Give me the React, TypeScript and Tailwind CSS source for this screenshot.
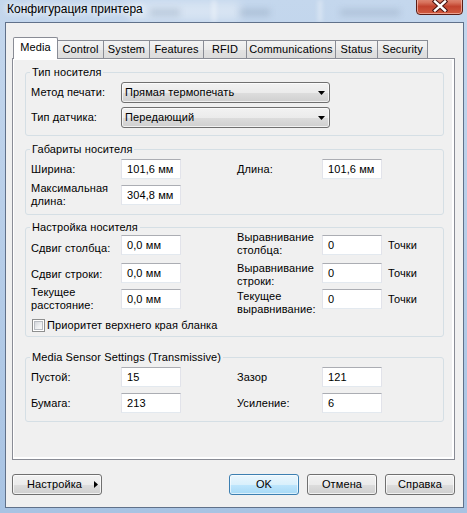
import React from "react";

function TB({ v }: { v: string }) {
  return (
    <div className="w-[60px] h-[20px] shrink-0 bg-white border border-[#e2e3ea] border-t-[#abadb3] border-b-[#e3e9ef] pl-[5px] flex items-center">
      {v}
    </div>
  );
}

function Combo({ v }: { v: string }) {
  return (
    <div className="w-[209px] h-[21px] shrink-0 rounded-[3px] border border-[#707070] bg-[linear-gradient(180deg,#f2f2f2_0%,#ebebeb_50%,#dddddd_51%,#cfcfcf_100%)] shadow-[inset_0_0_0_1px_rgba(255,255,255,0.7)] flex items-center pl-[3px] pr-[4px]">
      <span className="flex-1">{v}</span>
      <svg width="7" height="4" viewBox="0 0 7 4">
        <path d="M0 0H7L3.5 4Z" fill="#000" />
      </svg>
    </div>
  );
}

function Btn({
  children,
  cls,
  def,
}: {
  children: React.ReactNode;
  cls: string;
  def?: boolean;
}) {
  return (
    <div
      className={
        def
          ? `h-[21px] rounded-[3px] border border-[#3c7fb1] bg-[linear-gradient(180deg,#eaf6fd_0%,#d9f0fc_50%,#bee6fd_51%,#a7d9f5_100%)] shadow-[inset_0_0_0_1px_rgba(255,255,255,0.6)] flex items-center ${cls}`
          : `h-[21px] rounded-[3px] border border-[#707070] bg-[linear-gradient(180deg,#f2f2f2_0%,#ebebeb_50%,#dddddd_51%,#cfcfcf_100%)] shadow-[inset_0_0_0_1px_rgba(255,255,255,0.7)] flex items-center ${cls}`
      }
    >
      {children}
    </div>
  );
}

function Tab({ label, w }: { label: string; w: string }) {
  return (
    <div
      className={`h-[18px] border-t border-r border-[#898c95] bg-[linear-gradient(180deg,#f3f3f3_0%,#ebebeb_50%,#e2e2e2_51%,#dcdcdc_100%)] flex items-center justify-center ${w}`}
    >
      {label}
    </div>
  );
}

export default function App() {
  return (
    <div className="relative w-[467px] h-[513px] overflow-hidden bg-[linear-gradient(180deg,#c4d7ed_0%,#bcd1ea_30%,#b0c9e6_70%,#a8c3e3_100%)] text-[11px] leading-[13px] tracking-[0.1px] text-black font-['Liberation_Sans',Arial,sans-serif]">
      {/* blurred glass ghosts */}
      <div className="absolute left-[130px] top-[2px] w-[110px] h-[18px] bg-white/35 blur-[5px]" />
      <div className="absolute left-[150px] top-[9px] w-[30px] h-[7px] bg-[#8499b0]/35 blur-[3px]" />
      <div className="absolute left-[240px] top-[9px] w-[30px] h-[7px] bg-[#8499b0]/35 blur-[3px]" />
      <div className="absolute left-[340px] top-[9px] w-[60px] h-[7px] bg-[#8499b0]/30 blur-[3px]" />
      <div className="absolute left-[212px] top-[0px] w-[4px] h-[22px] bg-white/40 blur-[2px]" />
      <div className="absolute left-[318px] top-[0px] w-[4px] h-[22px] bg-white/40 blur-[2px]" />

      {/* title bar */}
      <div className="relative h-[22px] pl-[7px] pt-[2px]">
        <span className="text-[12px] leading-[14px] tracking-normal [text-shadow:0_0_6px_#fff,0_0_10px_#fff]">
          Конфигурация принтера
        </span>
      </div>

      {/* close button */}
      <div className="absolute left-[416px] top-[-6px] w-[47px] h-[21px] rounded-b-[4px] border border-[#5b1d15] bg-[linear-gradient(180deg,#e8a493_0%,#d7715b_40%,#c2432e_60%,#d15a3f_100%)] shadow-[inset_0_0_0_1px_rgba(255,210,200,0.6)] flex items-end justify-center pb-[2px]">
        <svg width="16" height="12" viewBox="0 0 16 12">
          <path d="M3 1.5L13 10.5M13 1.5L3 10.5" stroke="#4a1410" strokeWidth="4.5" strokeLinecap="square" />
          <path d="M3 1.5L13 10.5M13 1.5L3 10.5" stroke="#ffffff" strokeWidth="2.4" strokeLinecap="square" />
        </svg>
      </div>

      {/* client area */}
      <div className="relative ml-[5px] w-[459px] h-[486px] border border-[#60718a] bg-[#f0f0f0] pt-[14px] pl-[6px] flex flex-col">
        {/* tabs */}
        <div className="flex items-end h-[21px] pl-[1px]">
          <div className="relative z-10 -mb-[1px] h-[22px] w-[45px] border border-b-0 border-[#898c95] rounded-t-[2px] bg-white flex items-center justify-center pb-[2px]">
            Media
          </div>
          <Tab label="Control" w="w-[46px]" />
          <Tab label="System" w="w-[46px]" />
          <Tab label="Features" w="w-[54px]" />
          <Tab label="RFID" w="w-[43px]" />
          <Tab label="Communications" w="w-[89px]" />
          <Tab label="Status" w="w-[42px]" />
          <Tab label="Security" w="w-[50px]" />
        </div>

        {/* panel */}
        <div className="w-[443px] h-[402px] border border-[#898c95] bg-white pt-[1px] pl-[1px] pr-[2px] pb-[2px]">
          <div className="h-full bg-[#f0f0f0] pt-[6px] pl-[11px]">
            {/* group 1 */}
            <fieldset className="w-[419px] border border-[#d5dfe5] rounded-[3px] pl-[5px] pt-[3px] pb-[7px]">
              <legend className="-ml-[1px] px-[2px] leading-[13px]">Тип носителя</legend>
              <div className="flex items-center h-[21px]">
                <div className="w-[90px] shrink-0">Метод печати:</div>
                <Combo v="Прямая термопечать" />
              </div>
              <div className="flex items-center h-[21px] mt-[4px]">
                <div className="w-[90px] shrink-0">Тип датчика:</div>
                <Combo v="Передающий" />
              </div>
            </fieldset>

            {/* group 2 */}
            <fieldset className="mt-[7px] w-[419px] border border-[#d5dfe5] rounded-[3px] pl-[5px] pt-[3px] pb-[9px]">
              <legend className="-ml-[1px] px-[2px] leading-[13px]">Габариты носителя</legend>
              <div className="flex items-center h-[20px]">
                <div className="w-[90px] shrink-0">Ширина:</div>
                <TB v="101,6 мм" />
                <div className="ml-[56px] w-[85px] shrink-0">Длина:</div>
                <TB v="101,6 мм" />
              </div>
              <div className="flex items-center h-[20px] mt-[6px]">
                <div className="w-[90px] shrink-0">
                  Максимальная
                  <br />
                  длина:
                </div>
                <TB v="304,8 мм" />
              </div>
            </fieldset>

            {/* group 3 */}
            <fieldset className="mt-[6px] w-[419px] border border-[#d5dfe5] rounded-[3px] pl-[5px] pt-[1px] pb-[4px]">
              <legend className="-ml-[1px] px-[2px] leading-[13px]">Настройка носителя</legend>
              <div className="flex items-center h-[20px]">
                <div className="w-[90px] shrink-0 mt-[6px]">Сдвиг столбца:</div>
                <TB v="0,0 мм" />
                <div className="ml-[56px] w-[85px] shrink-0 -mt-[3px]">
                  Выравнивание
                  <br />
                  столбца:
                </div>
                <TB v="0" />
                <div className="ml-[6px]">Точки</div>
              </div>
              <div className="flex items-center h-[20px] mt-[8px]">
                <div className="w-[90px] shrink-0 mt-[2px]">Сдвиг строки:</div>
                <TB v="0,0 мм" />
                <div className="ml-[56px] w-[85px] shrink-0 mt-[3px]">
                  Выравнивание
                  <br />
                  строки:
                </div>
                <TB v="0" />
                <div className="ml-[6px]">Точки</div>
              </div>
              <div className="flex items-center h-[20px] mt-[6px]">
                <div className="w-[90px] shrink-0">
                  Текущее
                  <br />
                  расстояние:
                </div>
                <TB v="0,0 мм" />
                <div className="ml-[56px] w-[85px] shrink-0 mt-[8px]">
                  Текущее
                  <br />
                  выравнивание:
                </div>
                <TB v="0" />
                <div className="ml-[6px]">Точки</div>
              </div>
              <div className="flex items-center h-[13px] mt-[10px] pl-[1px]">
                <div className="w-[13px] h-[13px] shrink-0 border border-[#8e8f8f] bg-white p-[1px]">
                  <div className="w-full h-full border border-[#b8bcc2] bg-[linear-gradient(135deg,#d4d7dc_0%,#eef0f2_60%,#fafafa_100%)]" />
                </div>
                <div className="ml-[2px]">Приоритет верхнего края бланка</div>
              </div>
            </fieldset>

            {/* group 4 */}
            <fieldset className="mt-[14px] w-[419px] border border-[#d5dfe5] rounded-[3px] pl-[5px] pt-[3px] pb-[8px]">
              <legend className="-ml-[1px] px-[2px] leading-[13px]">
                Media Sensor Settings (Transmissive)
              </legend>
              <div className="flex items-center h-[20px]">
                <div className="w-[90px] shrink-0">Пустой:</div>
                <TB v="15" />
                <div className="ml-[56px] w-[85px] shrink-0">Зазор</div>
                <TB v="121" />
              </div>
              <div className="flex items-center h-[20px] mt-[6px]">
                <div className="w-[90px] shrink-0">Бумага:</div>
                <TB v="213" />
                <div className="ml-[56px] w-[85px] shrink-0">Усиление:</div>
                <TB v="6" />
              </div>
            </fieldset>
          </div>
        </div>

        {/* buttons */}
        <div className="mt-[14px] w-[443px] flex justify-between">
          <Btn cls="w-[90px] pl-[14px] pr-[3px]">
            <span className="flex-1">Настройка</span>
            <svg width="4" height="7" viewBox="0 0 4 7">
              <path d="M0 0L4 3.5L0 7Z" fill="#000" />
            </svg>
          </Btn>
          <div className="flex gap-[8px]">
            <Btn cls="w-[70px] justify-center" def>
              OK
            </Btn>
            <Btn cls="w-[70px] justify-center">Отмена</Btn>
            <Btn cls="w-[70px] justify-center">Справка</Btn>
          </div>
        </div>
      </div>
    </div>
  );
}
